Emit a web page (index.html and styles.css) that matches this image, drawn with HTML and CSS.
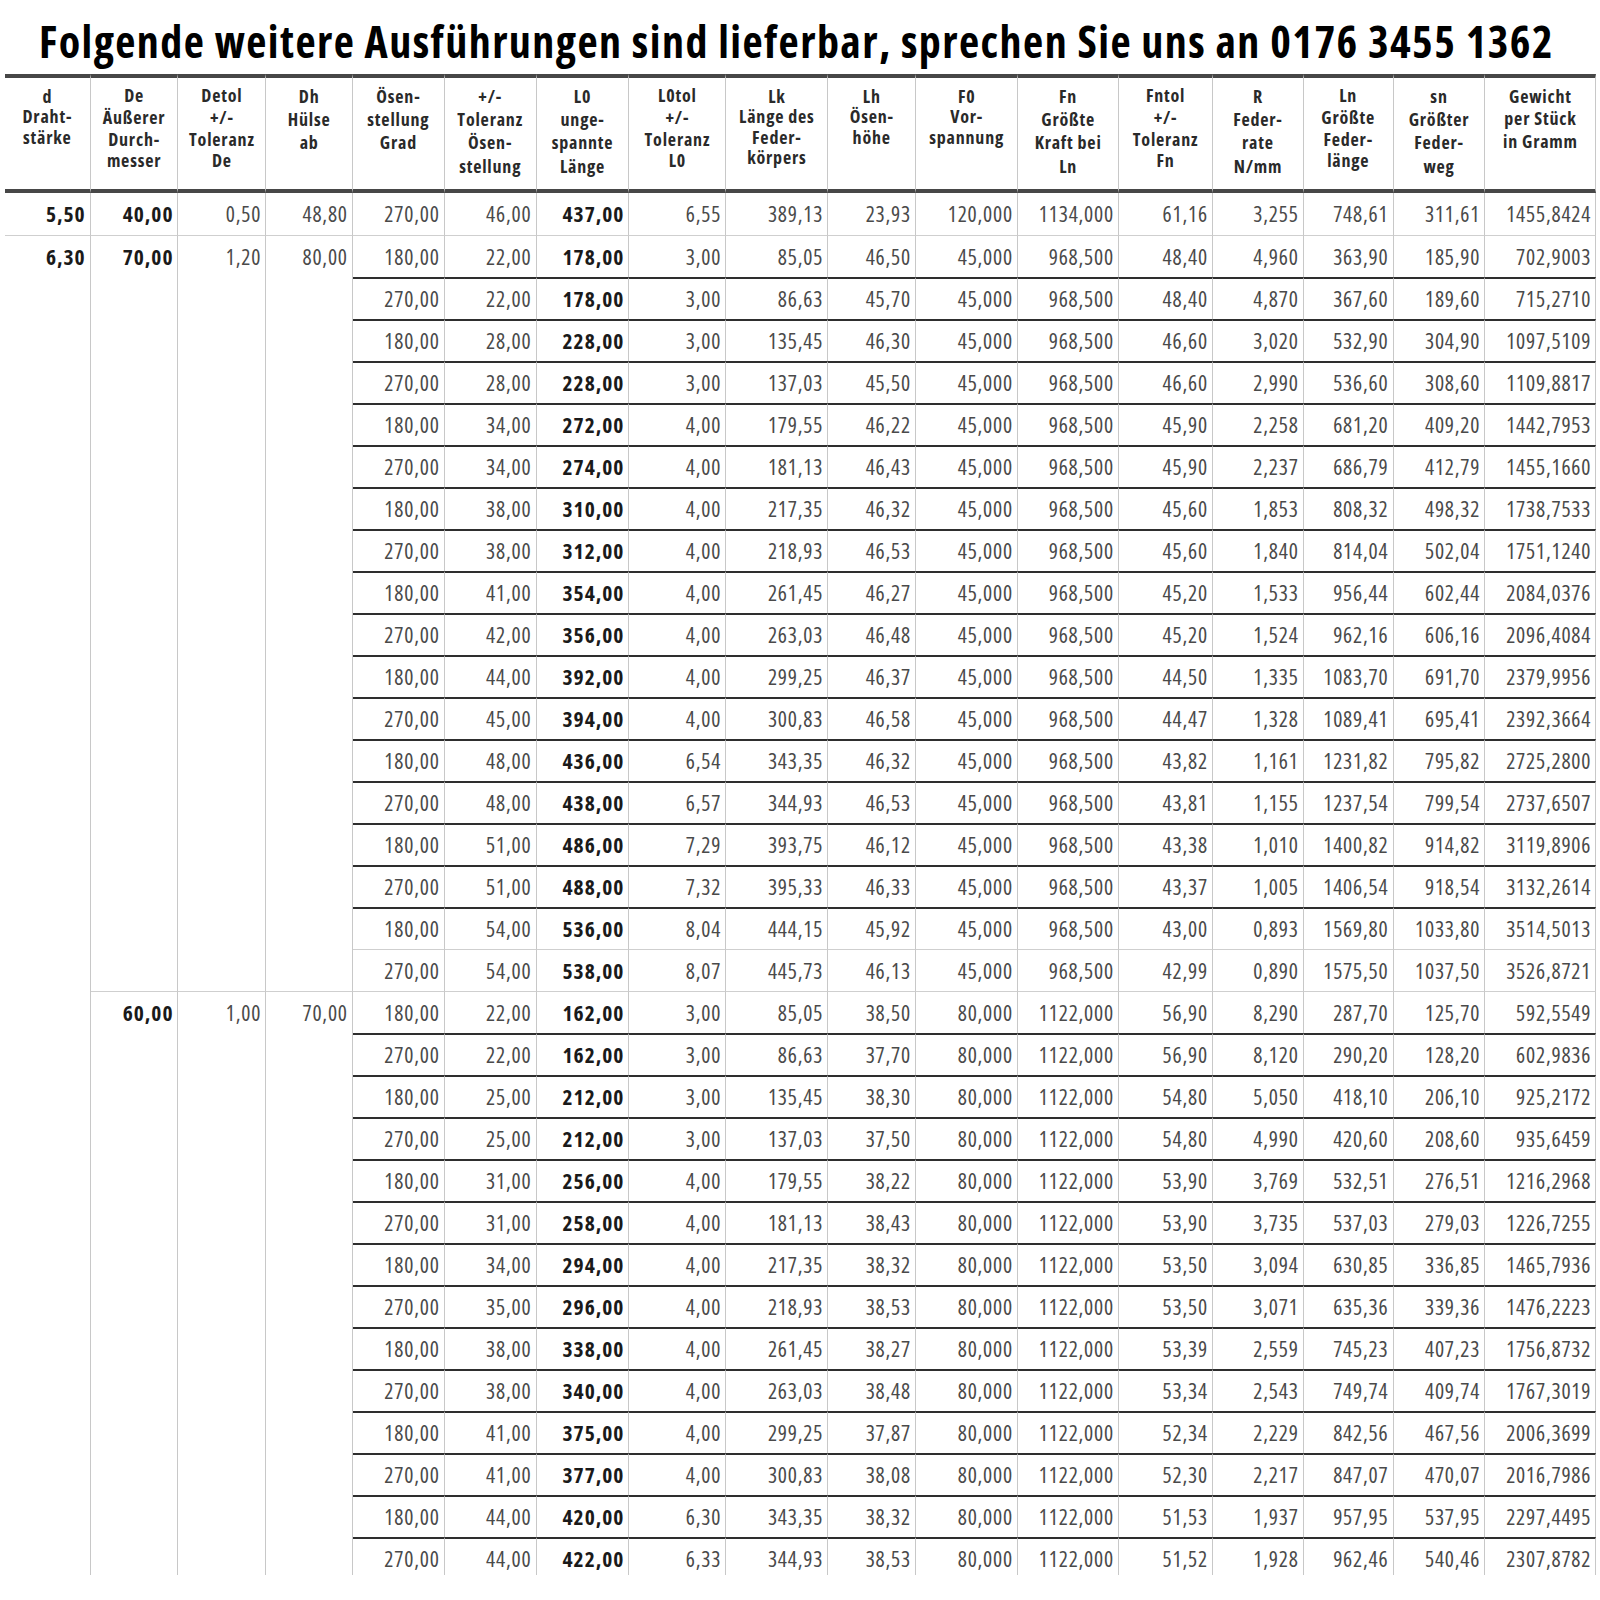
FILE: index.html
```html
<!DOCTYPE html>
<html lang="de">
<head>
<meta charset="utf-8">
<title>Ausführungen</title>
<link rel="stylesheet" href="styles.css">
</head>
<body>
<h1 class="title">Folgende weitere Ausführungen sind lieferbar, sprechen Sie uns an 0176 3455 1362</h1>
<div class="sheet">
<div class="grid">
  <div class="hd">
    <span class="l20">d<br>Draht-<br>stärke</span>
    <span class="l21">De<br>Äußerer<br>Durch-<br>messer</span>
    <span class="l21">Detol<br>+/-<br>Toleranz<br>De</span>
    <span class="l23">Dh<br>Hülse<br>ab</span>
    <span class="l23">Ösen-<br>stellung<br>Grad</span>
    <span class="l23">+/-<br>Toleranz<br>Ösen-<br>stellung</span>
    <span class="l23">L0<br>unge-<br>spannte<br>Länge</span>
    <span class="l21">L0tol<br>+/-<br>Toleranz<br>L0</span>
    <span class="l20">Lk<br>Länge des<br>Feder-<br>körpers</span>
    <span class="l20">Lh<br>Ösen-<br>höhe</span>
    <span class="l20">F0<br>Vor-<br>spannung</span>
    <span class="l23">Fn<br>Größte<br>Kraft bei<br>Ln</span>
    <span class="l21">Fntol<br>+/-<br>Toleranz<br>Fn</span>
    <span class="l23">R<br>Feder-<br>rate<br>N/mm</span>
    <span class="l21">Ln<br>Größte<br>Feder-<br>länge</span>
    <span class="l23">sn<br>Größter<br>Feder-<br>weg</span>
    <span class="l22">Gewicht<br>per Stück<br>in Gramm</span>
  </div>

  <div class="r first">
    <span class="b">5,50</span><span class="b">40,00</span><span>0,50</span><span>48,80</span><span>270,00</span><span>46,00</span><span class="b">437,00</span><span>6,55</span><span>389,13</span><span>23,93</span><span>120,000</span><span>1134,000</span><span>61,16</span><span>3,255</span><span>748,61</span><span>311,61</span><span>1455,8424</span>
  </div>

  <div class="r lt">
    <span class="b s32">6,30</span><span class="b s18">70,00</span><span class="s18">1,20</span><span class="s18">80,00</span><span>180,00</span><span>22,00</span><span class="b">178,00</span><span>3,00</span><span>85,05</span><span>46,50</span><span>45,000</span><span>968,500</span><span>48,40</span><span>4,960</span><span>363,90</span><span>185,90</span><span>702,9003</span>
  </div>
  <div class="r"><span>270,00</span><span>22,00</span><span class="b">178,00</span><span>3,00</span><span>86,63</span><span>45,70</span><span>45,000</span><span>968,500</span><span>48,40</span><span>4,870</span><span>367,60</span><span>189,60</span><span>715,2710</span></div>
  <div class="r"><span>180,00</span><span>28,00</span><span class="b">228,00</span><span>3,00</span><span>135,45</span><span>46,30</span><span>45,000</span><span>968,500</span><span>46,60</span><span>3,020</span><span>532,90</span><span>304,90</span><span>1097,5109</span></div>
  <div class="r"><span>270,00</span><span>28,00</span><span class="b">228,00</span><span>3,00</span><span>137,03</span><span>45,50</span><span>45,000</span><span>968,500</span><span>46,60</span><span>2,990</span><span>536,60</span><span>308,60</span><span>1109,8817</span></div>
  <div class="r"><span>180,00</span><span>34,00</span><span class="b">272,00</span><span>4,00</span><span>179,55</span><span>46,22</span><span>45,000</span><span>968,500</span><span>45,90</span><span>2,258</span><span>681,20</span><span>409,20</span><span>1442,7953</span></div>
  <div class="r"><span>270,00</span><span>34,00</span><span class="b">274,00</span><span>4,00</span><span>181,13</span><span>46,43</span><span>45,000</span><span>968,500</span><span>45,90</span><span>2,237</span><span>686,79</span><span>412,79</span><span>1455,1660</span></div>
  <div class="r"><span>180,00</span><span>38,00</span><span class="b">310,00</span><span>4,00</span><span>217,35</span><span>46,32</span><span>45,000</span><span>968,500</span><span>45,60</span><span>1,853</span><span>808,32</span><span>498,32</span><span>1738,7533</span></div>
  <div class="r"><span>270,00</span><span>38,00</span><span class="b">312,00</span><span>4,00</span><span>218,93</span><span>46,53</span><span>45,000</span><span>968,500</span><span>45,60</span><span>1,840</span><span>814,04</span><span>502,04</span><span>1751,1240</span></div>
  <div class="r"><span>180,00</span><span>41,00</span><span class="b">354,00</span><span>4,00</span><span>261,45</span><span>46,27</span><span>45,000</span><span>968,500</span><span>45,20</span><span>1,533</span><span>956,44</span><span>602,44</span><span>2084,0376</span></div>
  <div class="r"><span>270,00</span><span>42,00</span><span class="b">356,00</span><span>4,00</span><span>263,03</span><span>46,48</span><span>45,000</span><span>968,500</span><span>45,20</span><span>1,524</span><span>962,16</span><span>606,16</span><span>2096,4084</span></div>
  <div class="r"><span>180,00</span><span>44,00</span><span class="b">392,00</span><span>4,00</span><span>299,25</span><span>46,37</span><span>45,000</span><span>968,500</span><span>44,50</span><span>1,335</span><span>1083,70</span><span>691,70</span><span>2379,9956</span></div>
  <div class="r"><span>270,00</span><span>45,00</span><span class="b">394,00</span><span>4,00</span><span>300,83</span><span>46,58</span><span>45,000</span><span>968,500</span><span>44,47</span><span>1,328</span><span>1089,41</span><span>695,41</span><span>2392,3664</span></div>
  <div class="r"><span>180,00</span><span>48,00</span><span class="b">436,00</span><span>6,54</span><span>343,35</span><span>46,32</span><span>45,000</span><span>968,500</span><span>43,82</span><span>1,161</span><span>1231,82</span><span>795,82</span><span>2725,2800</span></div>
  <div class="r"><span>270,00</span><span>48,00</span><span class="b">438,00</span><span>6,57</span><span>344,93</span><span>46,53</span><span>45,000</span><span>968,500</span><span>43,81</span><span>1,155</span><span>1237,54</span><span>799,54</span><span>2737,6507</span></div>
  <div class="r"><span>180,00</span><span>51,00</span><span class="b">486,00</span><span>7,29</span><span>393,75</span><span>46,12</span><span>45,000</span><span>968,500</span><span>43,38</span><span>1,010</span><span>1400,82</span><span>914,82</span><span>3119,8906</span></div>
  <div class="r"><span>270,00</span><span>51,00</span><span class="b">488,00</span><span>7,32</span><span>395,33</span><span>46,33</span><span>45,000</span><span>968,500</span><span>43,37</span><span>1,005</span><span>1406,54</span><span>918,54</span><span>3132,2614</span></div>
  <div class="r"><span>180,00</span><span>54,00</span><span class="b">536,00</span><span>8,04</span><span>444,15</span><span>45,92</span><span>45,000</span><span>968,500</span><span>43,00</span><span>0,893</span><span>1569,80</span><span>1033,80</span><span>3514,5013</span></div>
  <div class="r lt"><span>270,00</span><span>54,00</span><span class="b">538,00</span><span>8,07</span><span>445,73</span><span>46,13</span><span>45,000</span><span>968,500</span><span>42,99</span><span>0,890</span><span>1575,50</span><span>1037,50</span><span>3526,8721</span></div>

  <div class="r lt">
    <span class="b s14">60,00</span><span class="s14">1,00</span><span class="s14">70,00</span><span>180,00</span><span>22,00</span><span class="b">162,00</span><span>3,00</span><span>85,05</span><span>38,50</span><span>80,000</span><span>1122,000</span><span>56,90</span><span>8,290</span><span>287,70</span><span>125,70</span><span>592,5549</span>
  </div>
  <div class="r"><span>270,00</span><span>22,00</span><span class="b">162,00</span><span>3,00</span><span>86,63</span><span>37,70</span><span>80,000</span><span>1122,000</span><span>56,90</span><span>8,120</span><span>290,20</span><span>128,20</span><span>602,9836</span></div>
  <div class="r"><span>180,00</span><span>25,00</span><span class="b">212,00</span><span>3,00</span><span>135,45</span><span>38,30</span><span>80,000</span><span>1122,000</span><span>54,80</span><span>5,050</span><span>418,10</span><span>206,10</span><span>925,2172</span></div>
  <div class="r"><span>270,00</span><span>25,00</span><span class="b">212,00</span><span>3,00</span><span>137,03</span><span>37,50</span><span>80,000</span><span>1122,000</span><span>54,80</span><span>4,990</span><span>420,60</span><span>208,60</span><span>935,6459</span></div>
  <div class="r"><span>180,00</span><span>31,00</span><span class="b">256,00</span><span>4,00</span><span>179,55</span><span>38,22</span><span>80,000</span><span>1122,000</span><span>53,90</span><span>3,769</span><span>532,51</span><span>276,51</span><span>1216,2968</span></div>
  <div class="r"><span>270,00</span><span>31,00</span><span class="b">258,00</span><span>4,00</span><span>181,13</span><span>38,43</span><span>80,000</span><span>1122,000</span><span>53,90</span><span>3,735</span><span>537,03</span><span>279,03</span><span>1226,7255</span></div>
  <div class="r"><span>180,00</span><span>34,00</span><span class="b">294,00</span><span>4,00</span><span>217,35</span><span>38,32</span><span>80,000</span><span>1122,000</span><span>53,50</span><span>3,094</span><span>630,85</span><span>336,85</span><span>1465,7936</span></div>
  <div class="r"><span>270,00</span><span>35,00</span><span class="b">296,00</span><span>4,00</span><span>218,93</span><span>38,53</span><span>80,000</span><span>1122,000</span><span>53,50</span><span>3,071</span><span>635,36</span><span>339,36</span><span>1476,2223</span></div>
  <div class="r"><span>180,00</span><span>38,00</span><span class="b">338,00</span><span>4,00</span><span>261,45</span><span>38,27</span><span>80,000</span><span>1122,000</span><span>53,39</span><span>2,559</span><span>745,23</span><span>407,23</span><span>1756,8732</span></div>
  <div class="r"><span>270,00</span><span>38,00</span><span class="b">340,00</span><span>4,00</span><span>263,03</span><span>38,48</span><span>80,000</span><span>1122,000</span><span>53,34</span><span>2,543</span><span>749,74</span><span>409,74</span><span>1767,3019</span></div>
  <div class="r"><span>180,00</span><span>41,00</span><span class="b">375,00</span><span>4,00</span><span>299,25</span><span>37,87</span><span>80,000</span><span>1122,000</span><span>52,34</span><span>2,229</span><span>842,56</span><span>467,56</span><span>2006,3699</span></div>
  <div class="r"><span>270,00</span><span>41,00</span><span class="b">377,00</span><span>4,00</span><span>300,83</span><span>38,08</span><span>80,000</span><span>1122,000</span><span>52,30</span><span>2,217</span><span>847,07</span><span>470,07</span><span>2016,7986</span></div>
  <div class="r"><span>180,00</span><span>44,00</span><span class="b">420,00</span><span>6,30</span><span>343,35</span><span>38,32</span><span>80,000</span><span>1122,000</span><span>51,53</span><span>1,937</span><span>957,95</span><span>537,95</span><span>2297,4495</span></div>
  <div class="r"><span>270,00</span><span>44,00</span><span class="b">422,00</span><span>6,33</span><span>344,93</span><span>38,53</span><span>80,000</span><span>1122,000</span><span>51,52</span><span>1,928</span><span>962,46</span><span>540,46</span><span>2307,8782</span></div>
</div>
</div>
</body>
</html>
```

FILE: styles.css
```css
html, body {
  margin: 0;
  padding: 0;
  background: #ffffff;
}

body {
  width: 1600px;
  overflow: hidden;
  font-family: "Open Sans", "Noto Sans", sans-serif;
  font-stretch: 75%;
}

.title {
  margin: 0;
  box-sizing: border-box;
  width: 1600px;
  height: 74px;
  overflow: hidden;
  padding: 19px 0 0 39px;
  font-size: 44px;
  line-height: 44px;
  letter-spacing: 1.45px;
  font-weight: bold;
  color: #000;
  white-space: nowrap;
}

.sheet {
  margin-left: 5px;
  width: 1595px;
}

.grid {
  display: grid;
  grid-template-columns: 85.7px 87.8px 87.8px 86.7px 91.8px 91.8px 92.9px 96.9px 102px 87.8px 102px 101px 93.9px 90.8px 89.8px 91.8px 111px;
  grid-template-rows: 119px repeat(32, 42px) 38px;
  overflow: hidden;
}

.hd, .r {
  display: contents;
}

.hd > span {
  box-sizing: border-box;
  border-top: 4px solid #474747;
  border-bottom: 4px solid #474747;
  border-right: 1px solid #c8c8c8;
  text-align: center;
  font-size: 18px;
  letter-spacing: 0.8px;
  font-weight: bold;
  color: #2a2a2a;
  white-space: nowrap;
}

.hd > .l20 { line-height: 20.4px; padding-top: 8px; }
.hd > .l21 { line-height: 21.7px; padding-top: 7.3px; }
.hd > .l22 { line-height: 22.6px; padding-top: 6.9px; }
.hd > .l23 { line-height: 23.4px; padding-top: 6.5px; }

.r > span {
  box-sizing: border-box;
  border-right: 1px solid #c8c8c8;
  border-top: 2px solid #2e2e2e;
  text-align: right;
  padding-right: 4.2px;
  font-size: 21.5px;
  letter-spacing: 0.8px;
  line-height: 40px;
  color: #4a4a4a;
  white-space: nowrap;
}

.r.first > span {
  border-top: 0;
  line-height: 42px;
}

.r.lt > span {
  border-top: 1px solid #cfcfcf;
  line-height: 41px;
}

.r > .b {
  font-weight: bold;
  letter-spacing: 1px;
  padding-right: 4px;
  color: #1a1a1a;
}

.r > .s32 { grid-row: span 32; }
.r > .s18 { grid-row: span 18; }
.r > .s14 { grid-row: span 14; }
```
